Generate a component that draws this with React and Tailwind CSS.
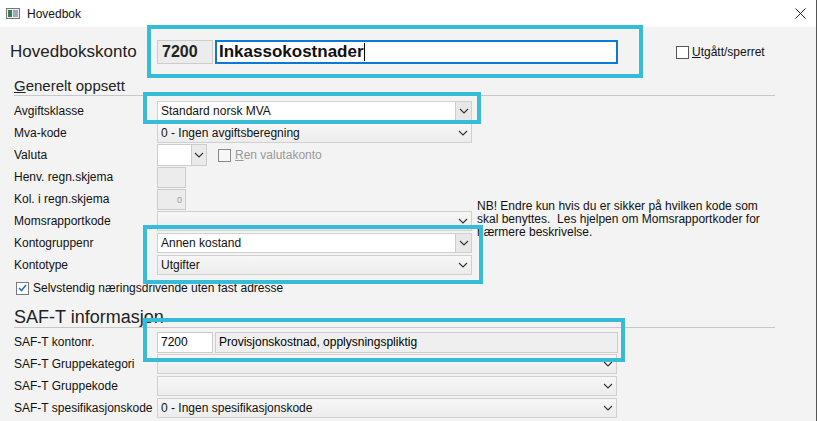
import React from "react";

const F = { fontFamily: '"Liberation Sans", Arial, sans-serif' };

function Chevron() {
  return (
    <svg width="10" height="6" viewBox="0 0 10 6" className="shrink-0">
      <path d="M1 1 L5 5 L9 1" fill="none" stroke="#333" strokeWidth="1.1" />
    </svg>
  );
}

function Select({ text, w = "w-[315px]", white = false, btn = false }) {
  return (
    <div className={`${w} h-[20px] flex items-center border border-[#d0d0d0] ${white ? "bg-white" : "bg-gradient-to-b from-[#f7f7f7] to-[#ececec]"}`}>
      <div className="flex-1 pl-[3px] text-[12px] text-[#111]">{text}</div>
      <div className={`w-[16px] h-full flex items-center justify-center ${btn ? "border-l border-[#ccc] bg-[#e8e8e8]" : ""}`}>
        <Chevron />
      </div>
    </div>
  );
}

function Row({ label, children }) {
  return (
    <div className="h-[22px] flex items-center">
      <div className="w-[143px] text-[12px] text-[#111]">{label}</div>
      {children}
    </div>
  );
}

const Cyan = ({ c }) => <div className={`absolute border-[4px] border-[#36bcd6] pointer-events-none ${c}`} />;

export default function App() {
  return (
    <div style={F} className="w-[817px] h-[421px] relative overflow-hidden bg-[#f3f3f3] border-r border-[#555]">
      <div className="h-[27px] bg-white flex items-center">
        <svg width="14" height="11" viewBox="0 0 14 11" className="ml-[6px]">
          <rect x="0.5" y="0.5" width="13" height="10" fill="#eee" stroke="#777" />
          <rect x="2" y="2" width="4" height="7" fill="#3a7a5a" />
          <rect x="7" y="2" width="5" height="7" fill="#9ab" />
        </svg>
        <span className="ml-[7px] text-[12px] text-[#111]">Hovedbok</span>
        <svg width="11" height="11" viewBox="0 0 11 11" className="ml-auto mr-[10px]">
          <path d="M0.5 0.5 L10.5 10.5 M10.5 0.5 L0.5 10.5" stroke="#222" strokeWidth="1" />
        </svg>
      </div>

      <div className="pl-[10px]">
        <div className="h-[50px] flex items-center">
          <div className="w-[147px] text-[17px] text-[#222]">Hovedbokskonto</div>
          <div className="w-[56px] h-[24px] bg-[#ececec] border border-[#ccc] flex items-center pl-[4px] text-[16px] font-bold text-[#222]">7200</div>
          <div className="ml-[2px] w-[403px] h-[24px] bg-white border-2 border-[#0a7ad6] flex items-center pl-[2px] text-[17px] font-bold text-[#111]">Inkassokostnader<span className="w-px h-[18px] bg-black" /></div>
          <div className="ml-[58px] flex items-center gap-[3px]">
            <div className="w-[13px] h-[13px] border border-[#555] bg-white" />
            <span className="text-[12px] text-[#111]"><u>U</u>tgått/sperret</span>
          </div>
        </div>

        <div className="pl-[4px] text-[15px] text-[#222] leading-[18px]"><u>G</u>enerelt oppsett</div>
        <div className="ml-[4px] w-[761px] h-px bg-[#c8c8c8] mb-[4px]" />

        <div className="pl-[4px] relative">
          <Row label="Avgiftsklasse"><Select text="Standard norsk MVA" white btn /></Row>
          <Row label="Mva-kode"><Select text="0 - Ingen avgiftsberegning" /></Row>
          <Row label="Valuta">
            <div className="w-[50px] h-[22px] flex border border-[#ccc]">
              <div className="w-[33px] bg-white" />
              <div className="flex-1 border-l border-[#ccc] bg-[#eaeaea] flex items-center justify-center"><Chevron /></div>
            </div>
            <div className="ml-[11px] w-[13px] h-[13px] border border-[#888] bg-[#f7f7f7]" />
            <span className="ml-[4px] text-[12px] text-[#999]"><u>R</u>en valutakonto</span>
          </Row>
          <Row label="Henv. regn.skjema"><div className="w-[29px] h-[21px] border border-[#ccc] bg-[#ececec]" /></Row>
          <Row label="Kol. i regn.skjema"><div className="w-[29px] h-[21px] border border-[#ccc] bg-[#ececec] text-[9px] text-[#999] text-right pr-[3px] leading-[20px]">0</div></Row>
          <Row label="Momsrapportkode"><Select text="" /></Row>
          <Row label="Kontogruppenr"><Select text="Annen kostand" white btn /></Row>
          <Row label="Kontotype"><Select text="Utgifter" /></Row>
          <div className="absolute left-[467px] top-[100px] text-[12px] text-[#111] leading-[13px] w-[300px]">
            NB! Endre kun hvis du er sikker på hvilken kode som skal benyttes.&nbsp; Les hjelpen om Momsrapportkoder for nærmere beskrivelse.
          </div>
        </div>

        <div className="h-[24px] flex items-center gap-[4px] pl-[6px]">
          <div className="w-[13px] h-[13px] border border-[#777] bg-white flex items-center justify-center">
            <svg width="9" height="8" viewBox="0 0 9 8"><path d="M1 4 L3.5 6.5 L8 1" fill="none" stroke="#1a6fc9" strokeWidth="1.6" /></svg>
          </div>
          <span className="text-[12px] text-[#111]">Selvstendig næringsdrivende uten fast adresse</span>
        </div>

        <div className="mt-[7px] pl-[4px] text-[18px] font-light text-[#222] leading-[20px]">SAF-T informasjon</div>
        <div className="ml-[4px] w-[761px] h-px bg-[#c8c8c8] mb-[3px]" />

        <div className="pl-[4px]">
          <Row label="SAF-T kontonr.">
            <div className="w-[56px] h-[21px] bg-white border border-[#ccc] flex items-center pl-[3px] text-[12px]">7200</div>
            <div className="ml-[2px] w-[403px] h-[21px] bg-[#efefef] border border-[#ccc] flex items-center pl-[3px] text-[12px]">Provisjonskostnad, opplysningspliktig</div>
          </Row>
          <Row label="SAF-T Gruppekategori"><Select text="" w="w-[460px]" /></Row>
          <Row label="SAF-T Gruppekode"><Select text="" w="w-[460px]" /></Row>
          <Row label="SAF-T spesifikasjonskode"><Select text="0 - Ingen spesifikasjonskode" w="w-[460px]" /></Row>
        </div>
      </div>

      <Cyan c="left-[147px] top-[25px] w-[496px] h-[53px]" />
      <Cyan c="left-[143px] top-[92px] w-[338px] h-[32px]" />
      <Cyan c="left-[143px] top-[225px] w-[340px] h-[59px]" />
      <Cyan c="left-[143px] top-[318px] w-[482px] h-[44px]" />
    </div>
  );
}
